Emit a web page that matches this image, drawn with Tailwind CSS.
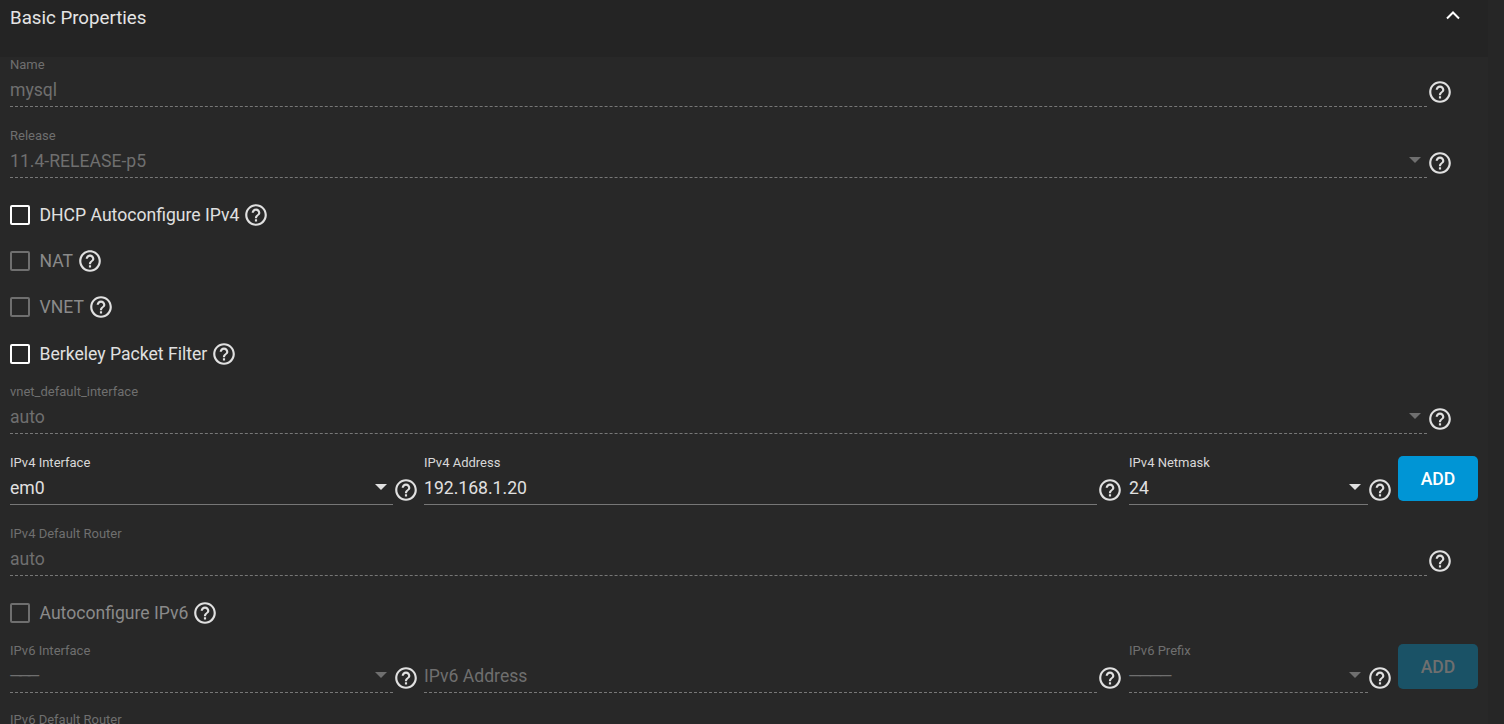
<!DOCTYPE html>
<html lang="en">
  <head>
    <meta charset="UTF-8">
    <title>Basic Properties</title>
    <script src="https://cdn.jsdelivr.net/npm/@tailwindcss/browser@4"></script>
  </head>
  <body class="bg-[#262626] font-['Roboto',sans-serif] h-[724px] overflow-hidden">
    <svg class="hidden">
      <symbol id="help" viewBox="0 0 24 24"><path fill="currentColor" d="M11 18h2v-2h-2v2zm1-16C6.48 2 2 6.48 2 12s4.48 10 10 10 10-4.48 10-10S17.52 2 12 2zm0 18c-4.41 0-8-3.59-8-8s3.59-8 8-8 8 3.59 8 8-3.59 8-8 8zm0-14c-2.21 0-4 1.79-4 4h2c0-1.1.9-2 2-2s2 .9 2 2c0 2-3 1.75-3 5h2c0-2.25 3-2.5 3-5 0-2.21-1.79-4-4-4z"/></symbol>
    </svg>
    <div class="w-[1488px] h-[724px] bg-[#282828]">
      <header class="h-[57px] bg-[#242424] pl-[10px] pr-[23px] flex justify-between">
        <h2 class="text-[18.7px] leading-[36px] text-[#e4e4e4]">Basic Properties</h2>
        <svg class="w-6 h-6 mt-[4px] text-white" viewBox="0 0 24 24"><path fill="none" stroke="currentColor" stroke-width="2" d="M6 14.5l6-6 6 6"/></svg>
      </header>

      <div class="pl-[10px] flex flex-col">
        <!-- name -->
        <div class="flex items-end h-[50px]">
          <div class="w-[1417px] border-b border-dashed border-[#777] h-[50px]">
            <div class="text-[13px] leading-[16px] text-[#6f6f6f]">Name</div>
            <div class="text-[17.6px] leading-[34px] text-[#6f6f6f]">mysql</div>
          </div>
          <svg class="w-[26px] h-[26px] text-[#e0e0e0] mb-[2.5px]"><use href="#help"/></svg>
        </div>
        <!-- release -->
        <div class="flex items-end h-[50px] mt-[21px]">
          <div class="w-[1417px] border-b border-dashed border-[#777] h-[50px] relative">
            <div class="text-[13px] leading-[16px] text-[#6f6f6f]">Release</div>
            <div class="text-[17.6px] leading-[34px] text-[#6f6f6f]">11.4-RELEASE-p5</div>
            <span class="absolute right-[6px] top-[29px] border-x-[6px] border-x-transparent border-t-[6px] border-t-[#6f6f6f]"></span>
          </div>
          <svg class="w-[26px] h-[26px] text-[#e0e0e0] mb-[2.5px]"><use href="#help"/></svg>
        </div>
        <!-- checkboxes -->
        <label class="flex items-center h-[24px] mt-[25px] text-[17.6px] text-[#e0e0e0]">
          <span class="w-5 h-5 border-2 border-white rounded-[2px] mr-[9.5px]"></span>DHCP Autoconfigure IPv4
          <svg class="w-[26px] h-[26px] ml-[3.5px]"><use href="#help"/></svg>
        </label>
        <label class="flex items-center h-[24px] mt-[22px] text-[17.6px] text-[#8a8a8a]">
          <span class="w-5 h-5 border-2 border-[#6f6f6f] rounded-[2px] mr-[9.5px]"></span>NAT
          <svg class="w-[26px] h-[26px] ml-[3.5px] text-[#e0e0e0]"><use href="#help"/></svg>
        </label>
        <label class="flex items-center h-[24px] mt-[22px] text-[17.6px] text-[#8a8a8a]">
          <span class="w-5 h-5 border-2 border-[#6f6f6f] rounded-[2px] mr-[9.5px]"></span>VNET
          <svg class="w-[26px] h-[26px] ml-[4.5px] text-[#e0e0e0]"><use href="#help"/></svg>
        </label>
        <label class="flex items-center h-[24px] mt-[23px] text-[17.6px] text-[#e0e0e0]">
          <span class="w-5 h-5 border-2 border-white rounded-[2px] mr-[9.5px]"></span>Berkeley Packet Filter
          <svg class="w-[26px] h-[26px] ml-[3.5px]"><use href="#help"/></svg>
        </label>
        <!-- vnet_default_interface -->
        <div class="flex items-end h-[50px] mt-[18px]">
          <div class="w-[1417px] border-b border-dashed border-[#777] h-[50px] relative">
            <div class="text-[13px] leading-[16px] text-[#6f6f6f]">vnet_default_interface</div>
            <div class="text-[17.6px] leading-[34px] text-[#6f6f6f]">auto</div>
            <span class="absolute right-[6px] top-[29px] border-x-[6px] border-x-transparent border-t-[6px] border-t-[#6f6f6f]"></span>
          </div>
          <svg class="w-[26px] h-[26px] text-[#e0e0e0] mb-[2.5px]"><use href="#help"/></svg>
        </div>
        <!-- ipv4 -->
        <div class="flex items-end h-[50px] mt-[21px]">
          <div class="w-[383px] border-b border-[#777] h-[50px] relative">
            <div class="text-[13px] leading-[16px] text-[#d8d8d8]">IPv4 Interface</div>
            <div class="text-[17.6px] leading-[34px] text-[#e0e0e0]">em0</div>
            <span class="absolute right-[6px] top-[29px] border-x-[6px] border-x-transparent border-t-[6px] border-t-[#e0e0e0]"></span>
          </div>
          <svg class="w-[26px] h-[26px] text-[#e0e0e0] mb-[2.5px]"><use href="#help"/></svg>
          <div class="w-[673px] ml-[5px] border-b border-[#777] h-[50px]">
            <div class="text-[13px] leading-[16px] text-[#d8d8d8]">IPv4 Address</div>
            <div class="text-[17.6px] leading-[34px] text-[#e0e0e0]">192.168.1.20</div>
          </div>
          <svg class="w-[26px] h-[26px] text-[#e0e0e0] mb-[2.5px]"><use href="#help"/></svg>
          <div class="w-[239px] ml-[6px] border-b border-[#777] h-[50px] relative">
            <div class="text-[13px] leading-[16px] text-[#d8d8d8]">IPv4 Netmask</div>
            <div class="text-[17.6px] leading-[34px] text-[#e0e0e0]">24</div>
            <span class="absolute right-[7px] top-[29px] border-x-[6px] border-x-transparent border-t-[6px] border-t-[#e0e0e0]"></span>
          </div>
          <svg class="w-[26px] h-[26px] -ml-[1px] text-[#e0e0e0] mb-[2.5px]"><use href="#help"/></svg>
          <button class="w-20 h-[45px] ml-[5px] mb-[4px] pt-[1px] rounded-[5px] bg-[#0095d5] text-white text-[17.6px] font-medium">ADD</button>
        </div>
        <!-- ipv4 router -->
        <div class="flex items-end h-[50px] mt-[21px]">
          <div class="w-[1417px] border-b border-dashed border-[#777] h-[50px]">
            <div class="text-[13px] leading-[16px] text-[#6f6f6f]">IPv4 Default Router</div>
            <div class="text-[17.6px] leading-[34px] text-[#6f6f6f]">auto</div>
          </div>
          <svg class="w-[26px] h-[26px] text-[#e0e0e0] mb-[2.5px]"><use href="#help"/></svg>
        </div>
        <label class="flex items-center h-[24px] mt-[25px] text-[17.6px] text-[#8a8a8a]">
          <span class="w-5 h-5 border-2 border-[#6f6f6f] rounded-[2px] mr-[9.5px]"></span>Autoconfigure IPv6
          <svg class="w-[26px] h-[26px] ml-[3.5px] text-[#e0e0e0]"><use href="#help"/></svg>
        </label>
        <!-- ipv6 -->
        <div class="flex items-end h-[50px] mt-[18px]">
          <div class="w-[383px] border-b border-dashed border-[#777] h-[50px] relative">
            <div class="text-[13px] leading-[16px] text-[#6f6f6f]">IPv6 Interface</div>
            <div class="text-[17.6px] leading-[34px] tracking-[-5px] -ml-[1px] text-[#6f6f6f]">———</div>
            <span class="absolute right-[6px] top-[29px] border-x-[6px] border-x-transparent border-t-[6px] border-t-[#6f6f6f]"></span>
          </div>
          <svg class="w-[26px] h-[26px] text-[#e0e0e0] mb-[2.5px]"><use href="#help"/></svg>
          <div class="w-[673px] ml-[5px] border-b border-dashed border-[#777] h-[50px]">
            <div class="h-[16px]"></div>
            <div class="text-[17.6px] leading-[34px] text-[#6f6f6f]">IPv6 Address</div>
          </div>
          <svg class="w-[26px] h-[26px] text-[#e0e0e0] mb-[2.5px]"><use href="#help"/></svg>
          <div class="w-[239px] ml-[6px] border-b border-dashed border-[#777] h-[50px] relative">
            <div class="text-[13px] leading-[16px] text-[#6f6f6f]">IPv6 Prefix</div>
            <div class="text-[17.6px] leading-[34px] tracking-[-3.5px] -ml-[1px] text-[#6f6f6f]">————</div>
            <span class="absolute right-[7px] top-[29px] border-x-[6px] border-x-transparent border-t-[6px] border-t-[#6f6f6f]"></span>
          </div>
          <svg class="w-[26px] h-[26px] -ml-[1px] text-[#e0e0e0] mb-[2.5px]"><use href="#help"/></svg>
          <button class="w-20 h-[45px] ml-[5px] mb-[4px] pt-[1px] rounded-[5px] bg-[#1a5266] text-[#6f6f6f] text-[17.6px] font-medium">ADD</button>
        </div>
        <div class="mt-[19px] text-[13px] leading-[16px] text-[#6f6f6f]">IPv6 Default Router</div>
      </div>
    </div>
  </body>
</html>
